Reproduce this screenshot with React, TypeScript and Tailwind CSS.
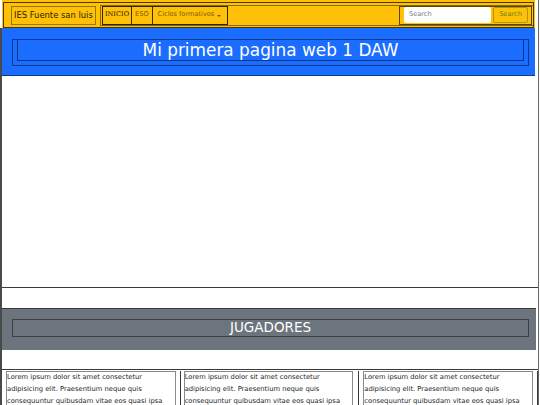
import React from "react";

const lorem =
  "Lorem ipsum dolor sit amet consectetur adipisicing elit. Praesentium neque quis consequuntur quibusdam vitae eos quasi ipsa officiis tempora numquam earum, rerum dolores";

function Col({ pl, pr }: { pl: string; pr: string }) {
  return (
    <div className={`h-full border-r border-[#3a3a3a] ${pl} ${pr}`}>
      <p className="h-full border border-[#8a8a8a] text-[6.75px] leading-[11.9px] text-[#212529]">
        {lorem}
      </p>
    </div>
  );
}

export default function App() {
  return (
    <div className="h-[405px] w-[540px] overflow-hidden bg-white font-['DejaVu_Sans',sans-serif] text-[#212529]">
      <div className="h-[405px] w-[539px] border-r border-[#6a6a6a]">
        {/* Navbar */}
        <nav className="ml-[2px] h-[28px] w-[533px] bg-[#ffc107] pt-[2px] px-[1px]">
          <div className="flex h-[26px] items-center border border-[#4a3900] pl-[7px]">
            <a className="flex h-[19px] w-[85px] items-center border border-[#9a7600] pl-[2px] text-[8.4px] text-[#2a2200]">
              IES Fuente san luis
            </a>
            <div className="ml-[4px] flex h-[21px] flex-1 items-center border-y border-l border-[#8a6a00] pl-[1px]">
              <ul className="flex h-[19px] items-stretch border border-[#2e2300] text-[6.6px]">
                <li className="flex items-center border-r border-[#3a2c00] px-[2px] font-['DejaVu_Serif',serif] font-medium text-[#1a1400]">
                  INICIO
                </li>
                <li className="flex items-center border-r border-[#3a2c00] px-[3px] text-[#7a5a10]">
                  ESO
                </li>
                <li className="flex items-center gap-[3px] pl-[5px] pr-[6px] text-[#7a5a10]">
                  Ciclos formativos
                  <span className="mt-[1px] inline-block h-0 w-0 border-x-[2px] border-t-[2.5px] border-x-transparent border-t-[#7a5a10]" />
                </li>
              </ul>
              <form className="ml-auto mr-[1px] flex h-[19px] items-center gap-[2px] border border-[#5a4500] pl-[4px] pr-[3px]">
                <div className="flex h-[16px] w-[87px] items-center rounded-[2px] bg-white pl-[5px] text-[6.6px] text-[#7a7a7a]">
                  Search
                </div>
                <div className="flex h-[16px] w-[35px] items-center justify-center rounded-[2px] border border-[#a89a10] text-[6.6px] text-[#5e840c]">
                  Search
                </div>
              </form>
            </div>
          </div>
        </nav>

        {/* Main */}
        <div className="h-[377px] border-l-2 border-[#4a4a4a]">
          <header className="h-[48px] w-[533px] border-b border-[#0a3a8c] bg-[#1a6dff] pt-[11px] pl-[10px] pr-[6px]">
            <div className="h-[27px] border border-[#0b3a90] px-[4px] pr-[4px]">
              <h1 className="flex h-[21px] items-center justify-center border border-[#0a358a] border-t-0 text-[16.9px] leading-none text-white">
                Mi primera pagina web 1 DAW
              </h1>
            </div>
          </header>

          <div className="h-[212px] border-b border-[#3a3a3a]" />
          <div className="h-[20px]" />

          <section className="h-[42px] w-[534px] border-t border-[#3a3a3a] bg-[#6c757d] pt-[10px] pl-[10px] pr-[7px]">
            <h2 className="flex h-[18px] items-center justify-center border border-[#3a3f44] text-[13.5px] leading-none text-white">
              JUGADORES
            </h2>
          </section>

          <div className="h-[20px] border-b border-[#3a3a3a]" />

          <div className="grid h-[40px] grid-cols-3 pt-[1px]">
            <Col pl="pl-[4px]" pr="pr-[4px]" />
            <Col pl="pl-[3px]" pr="pr-[5px]" />
            <Col pl="pl-[4px]" pr="pr-[4px]" />
          </div>
        </div>
      </div>
    </div>
  );
}
